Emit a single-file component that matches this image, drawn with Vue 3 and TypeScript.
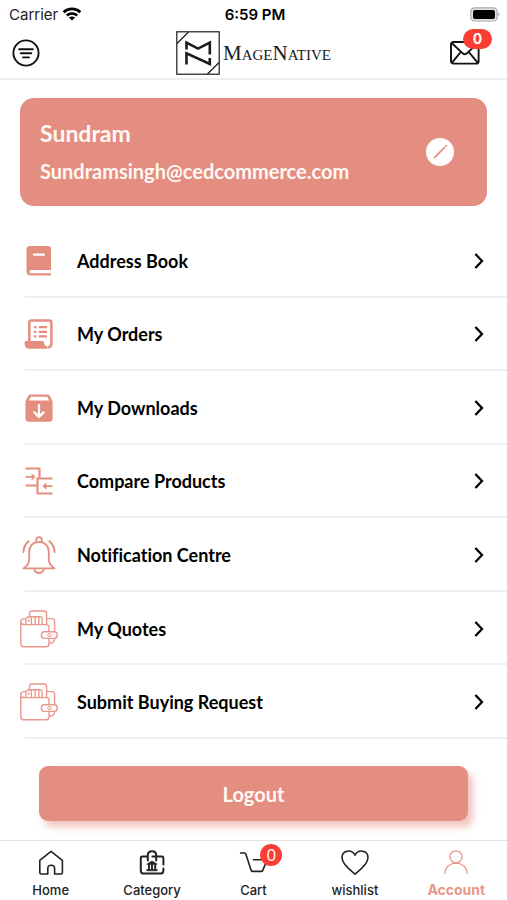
<script setup lang="ts">
import { ref } from 'vue'

type IconName = 'book' | 'orders' | 'download' | 'compare' | 'bell' | 'wallet'
type TabName = 'Home' | 'Category' | 'Cart' | 'wishlist' | 'Account'

interface MenuItem {
  label: string
  icon: IconName
}

const menu: MenuItem[] = [
  { label: 'Address Book', icon: 'book' },
  { label: 'My Orders', icon: 'orders' },
  { label: 'My Downloads', icon: 'download' },
  { label: 'Compare Products', icon: 'compare' },
  { label: 'Notification Centre', icon: 'bell' },
  { label: 'My Quotes', icon: 'wallet' },
  { label: 'Submit Buying Request', icon: 'wallet' },
]

const tabs: TabName[] = ['Home', 'Category', 'Cart', 'wishlist', 'Account']
const activeTab = ref<TabName>('Account')
const messageCount = ref(0)
const cartCount = ref(0)
</script>

<template>
  <div class="screen">
    <div class="status">
      <div class="carrier">
        <span>Carrier</span>
        <svg width="20" height="14" viewBox="0 0 20 14" aria-hidden="true">
          <g fill="none" stroke="#000" stroke-width="2.6">
            <path d="M1.6 5.2C6.3 0.8 13.7 0.8 18.4 5.2" />
            <path d="M4.8 8.5C7.7 5.9 12.3 5.9 15.2 8.5" />
          </g>
          <path d="M6.9 10.6C8.7 9 11.3 9 13.1 10.6L10 13.6Z" />
        </svg>
      </div>
      <span class="time">6:59 PM</span>
      <svg class="battery" width="31" height="15" viewBox="0 0 31 15" aria-hidden="true">
        <rect x="0.8" y="0.8" width="26.4" height="13.2" rx="4" fill="#e4e4e4" stroke="#a9a9a9" stroke-width="1.2" />
        <rect x="3" y="3" width="22" height="9" rx="2" />
        <path d="M28.6 5.2Q30.6 7.4 28.6 9.6Z" fill="#999" />
      </svg>
    </div>

    <header class="topbar">
      <button class="plain" type="button" aria-label="Menu">
        <svg width="28" height="28" viewBox="0 0 28 28" fill="none" stroke="#111" stroke-width="1.9" stroke-linecap="round">
          <circle cx="14" cy="14" r="12.6" />
          <path d="M7.2 10.2H20.8M8.8 14.2H19.2M11 18.4H17" />
        </svg>
      </button>
      <a class="brand" href="#">
        <svg width="44" height="44" viewBox="0 0 44 44" fill="none" stroke="#1b1b1b" aria-hidden="true">
          <rect x="0.8" y="0.8" width="42.4" height="42.4" stroke-width="1.2" />
          <path d="M1 12.5L12.5 1M31.5 43L43 31.5" stroke-width="1.2" />
          <path d="M10.5 18.5V11.6L22 17.6L33.8 11.6V23.4M10.5 33.6V22.2L33.8 33V27" stroke-width="2.6" />
        </svg>
        <span class="brand-name">MageNative</span>
      </a>
      <button class="plain mail" type="button" aria-label="Messages">
        <svg width="30" height="24" viewBox="0 0 30 24" fill="none" stroke="#111" stroke-width="1.9" stroke-linejoin="round">
          <rect x="1" y="1" width="27.6" height="21.6" rx="2.4" />
          <path d="M1.8 2L13 12.6Q14.8 14 16.6 12.6L27.8 2M1.8 21.8L10.8 11M27.8 21.8L18.8 11" />
        </svg>
        <span class="mail-badge">{{ messageCount }}</span>
      </button>
    </header>

    <main class="content">
      <section class="profile">
        <div class="identity">
          <h1>Sundram</h1>
          <p>Sundramsingh@cedcommerce.com</p>
        </div>
        <button class="edit" type="button" aria-label="Edit profile">
          <svg width="28" height="28" viewBox="0 0 28 28" fill="none" stroke="#e48e80">
            <path d="M8.2 19.8L18.6 9.4" stroke-width="1.8" />
            <path d="M19.2 8.8L20.6 7.4" stroke-width="2" />
          </svg>
        </button>
      </section>

      <nav class="menu" aria-label="Account">
        <a v-for="item in menu" :key="item.label" class="row" href="#">
          <span class="row-icon">
            <svg v-if="item.icon === 'book'" width="26" height="30" viewBox="0 0 26 30">
              <path d="M4 0H22Q25 0 25 3V24H4.5Q3.5 24 3.5 25.6T4.5 27.2H25V29.6H5Q0.5 29.6 0.5 25V3.5Q0.5 0 4 0Z" fill="#e48e80" />
              <path d="M8 8.6H18" stroke="#fff" stroke-width="2.2" stroke-linecap="round" />
            </svg>
            <svg v-else-if="item.icon === 'orders'" width="30" height="30" viewBox="0 0 30 30">
              <path d="M5.3 22V3.5Q5.3 1.4 7.4 1.4H25.2Q27.4 1.4 27.4 3.6V24.5Q27.4 28.4 23.5 28.4" fill="none" stroke="#e48e80" stroke-width="2.5" />
              <path d="M1.5 22H18.5Q19.8 22 20 23.6Q20.4 27.2 23.2 27.2V29.8H5.5Q0.6 29.8 0.6 24V23Q0.6 22 1.5 22Z" fill="#e48e80" />
              <path d="M10 8.2H12.4M10 12.8H12.4M10 17.4H12.4M14.8 8.2H23M14.8 12.8H23M14.8 17.4H23" stroke="#e48e80" stroke-width="2.2" />
            </svg>
            <svg v-else-if="item.icon === 'download'" width="28" height="28" viewBox="0 0 28 28">
              <path d="M5.4 0.4H22.6Q24 0.4 24.7 1.7L27 6Q27.6 7 27.6 8.2V24.2Q27.6 27.8 24 27.8H4Q0.4 27.8 0.4 24.2V8.2Q0.4 7 1 6L3.3 1.7Q4 0.4 5.4 0.4Z" fill="#e48e80" />
              <path d="M5.8 2.8H22.2L24.2 6.6H3.8Z" fill="#fff" />
              <path d="M14 11.2V22.8M9.4 18.4L14 23L18.6 18.4" fill="none" stroke="#fff" stroke-width="2.3" stroke-linecap="round" stroke-linejoin="round" />
            </svg>
            <svg v-else-if="item.icon === 'compare'" width="28" height="28" viewBox="0 0 28 28" fill="none" stroke="#e48e80" stroke-width="2.2">
              <path d="M0.5 1.5H14.5V11.5M0.5 18.5H12.5M27.5 11.5H12.5V26.5H27.5" />
              <path d="M0.5 9.8H9M18.5 19.2H27.5" stroke-width="1.8" />
              <path d="M6.6 6.2L10.6 9.8L6.6 13.4ZM21.4 15.6L17.4 19.2L21.4 22.8Z" fill="#e48e80" stroke="none" />
            </svg>
            <svg v-else-if="item.icon === 'bell'" width="34" height="38" viewBox="0 0 34 38" fill="none" stroke="#e48e80" stroke-width="1.8" stroke-linejoin="round" stroke-linecap="round">
              <path d="M14.2 6.2V4Q14.2 1.2 17 1.2T19.8 4V6.2" />
              <path d="M17 5.8C10.5 5.8 7.2 10.6 7.2 16V23.5Q7.2 28.6 1.5 32.4H32.5Q26.8 28.6 26.8 23.5V16C26.8 10.6 23.5 5.8 17 5.8Z" />
              <path d="M12.2 33Q13 37 17 37T21.8 33" />
              <path d="M6.6 5.2Q1.8 9.2 1.4 16M27.4 5.2Q32.2 9.2 32.6 16" stroke-width="2" />
            </svg>
            <svg v-else width="38" height="38" viewBox="0 0 38 38" fill="none" stroke="#e9988c" stroke-width="1.4" stroke-linejoin="round">
              <path d="M5 14.6H26Q29 14.6 29 17.6V21.8M29 28.4V33.6Q29 36.8 26 36.8H3.8Q0.8 36.8 0.8 33.8V12Q0.8 8.6 4.4 8.6H5.6M0.8 12.4Q1.6 14.6 5 14.6" />
              <path d="M9.6 7.4V3.4Q9.6 1 12 1H24.2Q26.6 1 26.6 3.4V14.4" />
              <path d="M5.8 14.4V8.8L8 6.8H11.4V14.4M11.4 6.8H20.4Q22 6.8 22 8.6V14.4M15.2 6.8V14.4M18.8 6.8V14.4" />
              <path d="M8.6 9.4V12" />
              <path d="M26.6 8.6H32Q34.6 8.6 34.6 11.2V21.8M29 33H31Q34.6 32.4 34.6 28.4" />
              <rect x="21.4" y="21.8" width="15.8" height="6.6" rx="2.8" />
              <rect x="28" y="23.6" width="3" height="3" rx="0.8" stroke-width="1" />
            </svg>
          </span>
          <span class="row-body">
            <span>{{ item.label }}</span>
            <svg width="10" height="18" viewBox="0 0 10 18" fill="none" stroke="#000" stroke-width="2.3" aria-hidden="true">
              <path d="M1.4 2L8 9L1.4 16" />
            </svg>
          </span>
        </a>
      </nav>

      <button class="logout" type="button">Logout</button>
    </main>

    <nav class="tabs" aria-label="Main">
      <a
        v-for="tab in tabs"
        :key="tab"
        class="tab"
        :class="{ active: tab === activeTab }"
        href="#"
        @click.prevent="activeTab = tab"
      >
        <span class="tab-icon">
          <svg width="30" height="28" viewBox="0 0 30 28" fill="none" stroke="currentColor" stroke-width="1.6" stroke-linejoin="round" stroke-linecap="round">
            <path v-if="tab === 'Home'" d="M3.8 11.4L15 2.4L26.4 11.4V23.6Q26.4 25 25 25H18.6V19.4Q18.6 16.2 15.2 16.2T11.8 19.4V25H5.2Q3.8 25 3.8 23.6Z" />
            <template v-else-if="tab === 'Category'">
              <path d="M10.6 7.6H5.2Q3.8 7.6 3.8 9V21.4Q3.8 24.6 7 24.6H23.2Q26.4 24.6 26.4 21.4V19.4M26.4 15.4V9Q26.4 7.6 25 7.6H15.4M10.8 11.6V6.2Q10.8 2.2 15 2.2T19.2 6.2V11.4" stroke-width="2" />
              <path d="M10.4 14.8L15 12L19.8 14.8V15.6H10.4ZM10 20.4H20.2V21.8H10Z" fill="currentColor" stroke-width="0.6" />
              <path d="M12 16V20.6M15 16V20.6M18.2 16V20.6" stroke-width="1.9" />
            </template>
            <path v-else-if="tab === 'Cart'" d="M2.6 4H6.6Q7.4 4 7.8 5L13.2 21.4Q13.6 22.4 14.6 22.4H23.4Q24.4 22.4 24.8 21.4L29 10.8H15.4" />
            <path v-else-if="tab === 'wishlist'" d="M15 25.2C10.4 21.4 2 15.4 2 8.6C2 1.4 11.6-0.4 15 6.2C18.4-0.4 28 1.4 28 8.6C28 15.4 19.6 21.4 15 25.2Z" />
            <template v-else>
              <circle cx="15" cy="7.8" r="6" stroke-width="1.3" />
              <path d="M3.8 24.4C4.4 10.6 25.6 10.6 26.2 24.4" stroke-width="1.3" />
            </template>
          </svg>
          <span v-if="tab === 'Cart'" class="cart-badge">{{ cartCount }}</span>
        </span>
        <span>{{ tab }}</span>
      </a>
    </nav>
  </div>
</template>

<style>
body {
  margin: 0;
  background: #fff;
}
</style>

<style scoped>
.screen {
  box-sizing: border-box;
  min-height: 100vh;
  display: flex;
  flex-direction: column;
  background: #fff;
  color: #000;
  font-family: Lato, "Open Sans", sans-serif;
  font-variant-ligatures: none;
}

a {
  color: inherit;
  text-decoration: none;
}

button {
  font: inherit;
  border: 0;
  padding: 0;
  cursor: pointer;
}

svg {
  display: block;
  flex: none;
}

.status {
  display: grid;
  grid-template-columns: 1fr auto 1fr;
  align-items: center;
  height: 28px;
  padding: 0 6px 0 9px;
  font: 15px Inter, sans-serif;
}

.carrier {
  display: flex;
  align-items: center;
  gap: 4px;
  color: #222;
}

.time {
  font-weight: 600;
}

.battery {
  justify-self: end;
}

.topbar {
  display: grid;
  grid-template-columns: 1fr auto 1fr;
  align-items: center;
  height: 50px;
  padding: 0 12px;
  border-bottom: 2px solid #ededed;
}

.plain {
  position: relative;
  justify-self: start;
  background: none;
}

.mail {
  justify-self: end;
  margin-right: 15px;
}

.mail-badge {
  position: absolute;
  top: -12px;
  left: 13px;
  width: 29px;
  border-radius: 10px;
  background: #fc3d33;
  color: #fff;
  font: bold 14px/20px Inter, sans-serif;
  text-align: center;
}

.brand {
  display: flex;
  align-items: center;
  gap: 3px;
}

.brand-name {
  color: #1b1b1b;
  font-family: "Liberation Serif", serif;
  font-size: 21px;
  font-variant: small-caps;
}

.content {
  flex: 1;
  display: flex;
  flex-direction: column;
}

.profile {
  display: flex;
  align-items: center;
  justify-content: space-between;
  margin: 18px 20px;
  padding: 20px 33px 20px 20px;
  border-radius: 14px;
  background: #e38e80;
  color: #fff8f5;
}

.identity {
  display: grid;
  gap: 8px;
}

.profile h1,
.profile p {
  margin: 0;
  font-weight: 700;
  line-height: 30px;
}

.profile h1 {
  font-size: 23px;
}

.profile p {
  font-size: 20px;
}

.edit {
  border-radius: 50%;
  background: #fff;
}

.menu {
  flex: 1;
  display: grid;
  grid-auto-rows: 1fr;
}

.row {
  position: relative;
  display: flex;
  align-items: center;
  min-height: 56px;
}

.row::after {
  content: "";
  position: absolute;
  right: 0;
  bottom: 0;
  left: 25px;
  height: 2px;
  background: #efefef;
}

.row-icon {
  width: 77px;
  display: flex;
  justify-content: center;
}

.row-body {
  flex: 1;
  display: flex;
  align-items: center;
  justify-content: space-between;
  padding-right: 23px;
  font-size: 18px;
  font-weight: 700;
}

.logout {
  height: 55px;
  margin: 27px 39px 19px;
  border-radius: 9px;
  background: #e38e80;
  box-shadow: 5px 6px 7px rgba(227, 142, 128, 0.5);
  color: #fff8f5;
  font-size: 20px;
  font-weight: 700;
}

.tabs {
  display: grid;
  grid-template-columns: repeat(5, 1fr);
  border-top: 1px solid #e2e0e0;
}

.tab {
  display: flex;
  flex-direction: column;
  align-items: center;
  gap: 4px;
  padding: 8px 0 1px;
  color: #222;
  font: 500 13px/18px Inter, sans-serif;
}

.tab.active {
  color: #e9958a;
  font-size: 14px;
  font-weight: 700;
}

.tab-icon {
  position: relative;
}

.cart-badge {
  position: absolute;
  top: -5px;
  left: 22px;
  width: 22px;
  border-radius: 50%;
  background: #fc3d33;
  color: #fff;
  font: 17px/22px "Open Sans", sans-serif;
  text-align: center;
}
</style>
